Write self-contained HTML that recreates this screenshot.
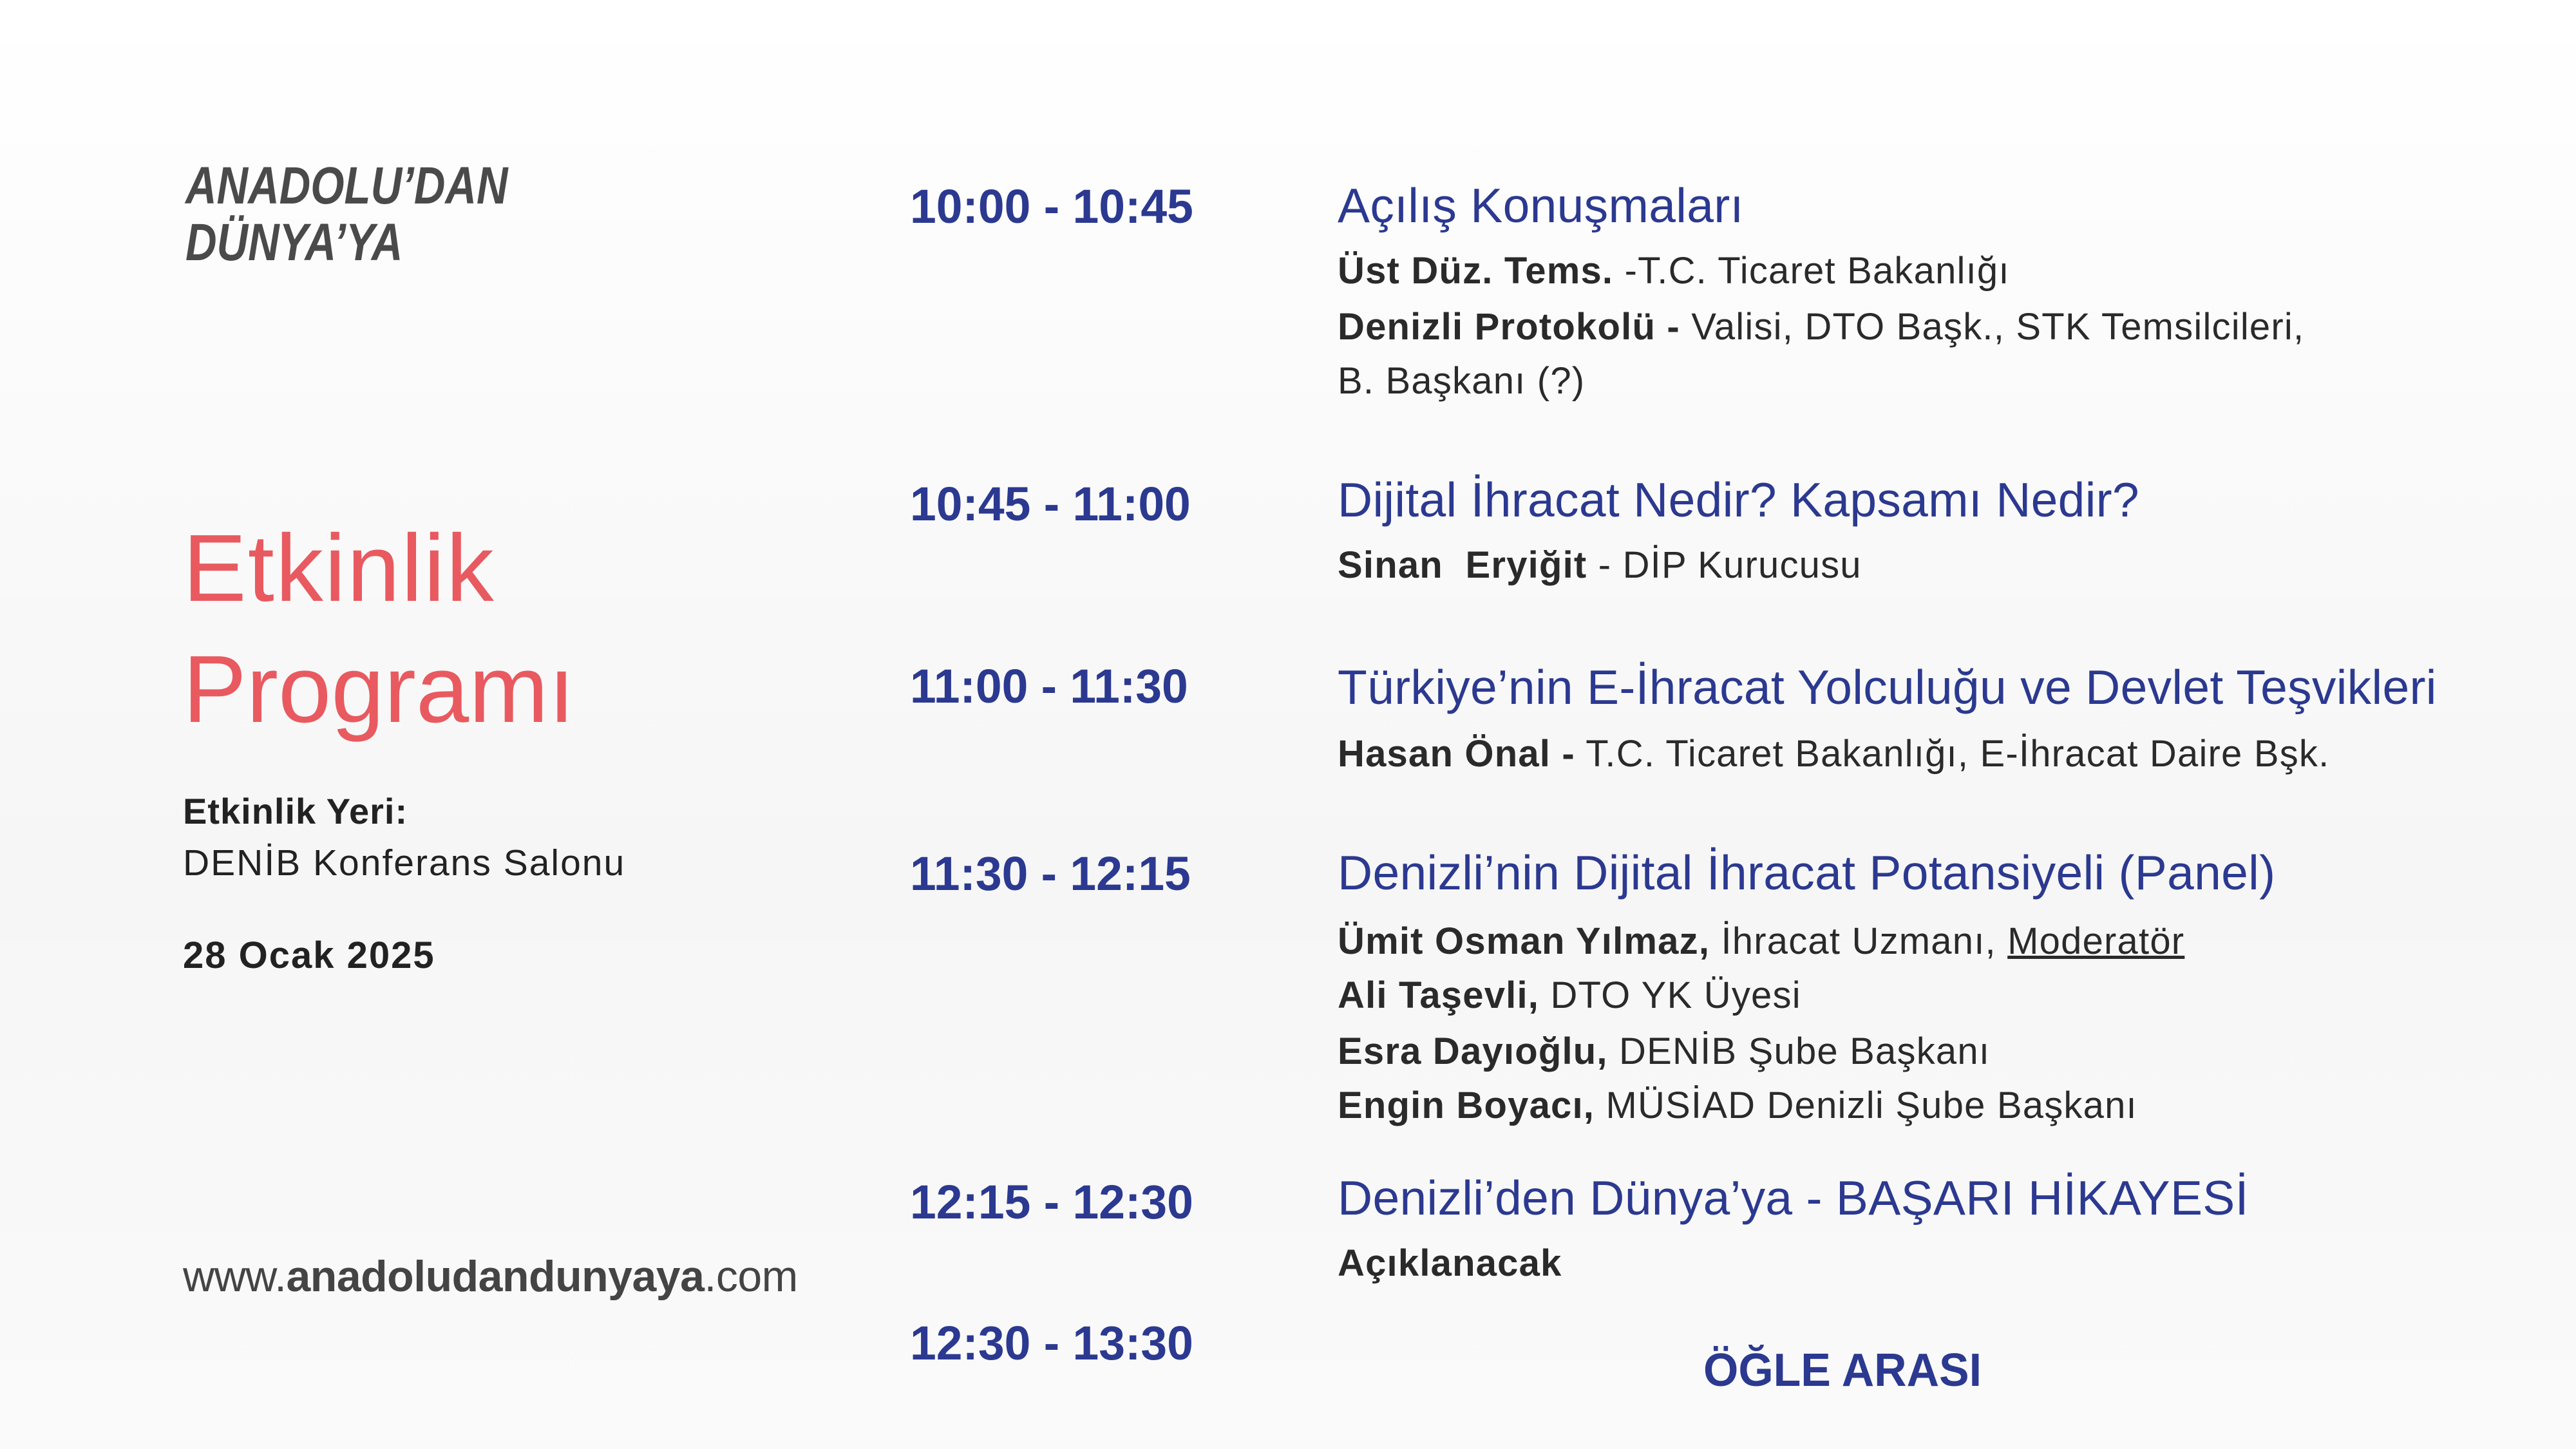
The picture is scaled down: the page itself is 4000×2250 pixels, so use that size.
<!DOCTYPE html>
<html><head><meta charset="utf-8">
<style>
html,body{margin:0;padding:0}
body{width:4000px;height:2250px;position:relative;overflow:hidden;background:#fff;font-family:"Liberation Sans",sans-serif}
.bg{position:absolute;inset:0;background:
linear-gradient(180deg,rgba(0,0,0,0) 0%,rgba(0,0,0,0.02) 30%,rgba(0,0,0,0.035) 60%,rgba(0,0,0,0.02) 100%);}
.t{position:absolute;white-space:nowrap;line-height:1}
.time{color:#2b3990;font-weight:bold;font-size:74px;transform:scaleX(0.99);transform-origin:left}
.title{color:#2b3990;font-size:75px;letter-spacing:0.3px}
.sub{color:#2a2a2a;font-size:58px;letter-spacing:1.2px}
.sub b{font-weight:bold}
</style></head><body>
<div class="bg"></div>

<div class="t" style="left:288px;top:245px;font-size:82px;font-weight:bold;font-style:italic;color:#4a4a4a;transform:scaleX(0.82);transform-origin:left;line-height:88px">ANADOLU’DAN<br>DÜNYA’YA</div>

<div class="t" style="left:284px;top:809px;font-size:148px;color:#e85a5f;letter-spacing:2px">Etkinlik</div>
<div class="t" style="left:284px;top:997px;font-size:148px;color:#e85a5f">Programı</div>
<div class="t" style="left:284px;top:1232px;font-size:56px;font-weight:bold;color:#222;letter-spacing:1px">Etkinlik Yeri:</div>
<div class="t" style="left:284px;top:1312px;font-size:57px;color:#222;letter-spacing:2px">DENİB Konferans Salonu</div>
<div class="t" style="left:284px;top:1455px;font-size:58px;font-weight:bold;color:#222;letter-spacing:2px">28 Ocak 2025</div>
<div class="t" style="left:284px;top:1948px;font-size:68px;color:#444;letter-spacing:-0.5px">www.<b>anadoludandunyaya</b>.com</div>

<div class="t time" style="left:1413px;top:284px">10:00 - 10:45</div>
<div class="t title" style="left:2077px;top:282px">Açılış Konuşmaları</div>
<div class="t sub" style="left:2077px;top:392px"><b>Üst Düz. Tems.</b> -T.C. Ticaret Bakanlığı</div>
<div class="t sub" style="left:2077px;top:479px"><b>Denizli Protokolü -</b> Valisi, DTO Başk., STK Temsilcileri,</div>
<div class="t sub" style="left:2077px;top:563px">B. Başkanı (?)</div>

<div class="t time" style="left:1413px;top:746px">10:45 - 11:00</div>
<div class="t title" style="left:2077px;top:739px">Dijital İhracat Nedir? Kapsamı Nedir?</div>
<div class="t sub" style="left:2077px;top:849px"><b>Sinan&nbsp; Eryiğit</b> - DİP Kurucusu</div>

<div class="t time" style="left:1413px;top:1029px">11:00 - 11:30</div>
<div class="t title" style="left:2077px;top:1030px">Türkiye’nin E-İhracat Yolculuğu ve Devlet Teşvikleri</div>
<div class="t sub" style="left:2077px;top:1142px"><b>Hasan Önal -</b> T.C. Ticaret Bakanlığı, E-İhracat Daire Bşk.</div>

<div class="t time" style="left:1413px;top:1320px">11:30 - 12:15</div>
<div class="t title" style="left:2077px;top:1318px">Denizli’nin Dijital İhracat Potansiyeli (Panel)</div>
<div class="t sub" style="left:2077px;top:1433px"><b>Ümit Osman Yılmaz,</b> İhracat Uzmanı, <u>Moderatör</u></div>
<div class="t sub" style="left:2077px;top:1517px"><b>Ali Taşevli,</b> DTO YK Üyesi</div>
<div class="t sub" style="left:2077px;top:1604px"><b>Esra Dayıoğlu,</b> DENİB Şube Başkanı</div>
<div class="t sub" style="left:2077px;top:1688px"><b>Engin Boyacı,</b> MÜSİAD Denizli Şube Başkanı</div>

<div class="t time" style="left:1413px;top:1830px">12:15 - 12:30</div>
<div class="t title" style="left:2077px;top:1823px">Denizli’den Dünya’ya - BAŞARI HİKAYESİ</div>
<div class="t sub" style="left:2077px;top:1933px"><b>Açıklanacak</b></div>

<div class="t time" style="left:1413px;top:2049px">12:30 - 13:30</div>
<div class="t" style="left:2645px;top:2092px;font-size:72px;font-weight:bold;color:#2b3990;transform:scaleX(0.97);transform-origin:left">ÖĞLE ARASI</div>
</body></html>
